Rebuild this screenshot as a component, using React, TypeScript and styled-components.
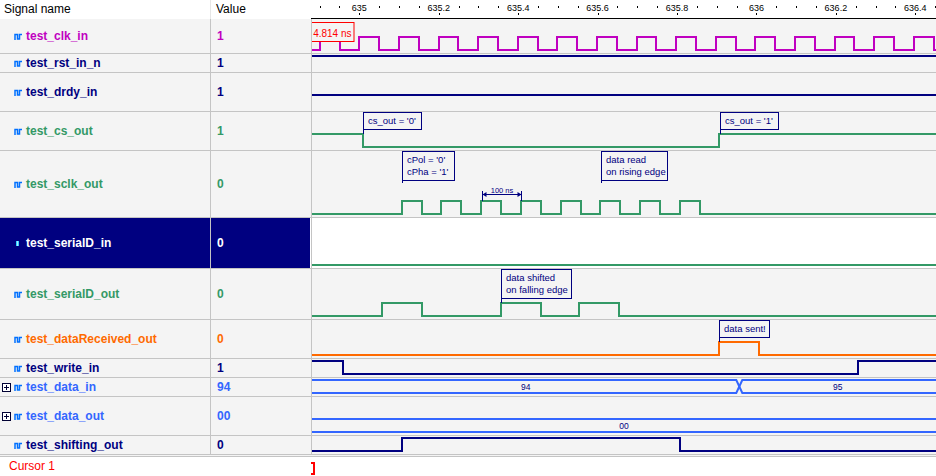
import React from 'react';
import styled, { createGlobalStyle } from 'styled-components';

const GlobalStyle = createGlobalStyle`
  html, body {
    margin: 0;
    padding: 0;
    background: #ffffff;
  }
  body {
    font-family: 'Liberation Sans', Arial, sans-serif;
  }
`;

const ROW_BG = '#f4f4f4';
const GRID = '#c4c4c4';
const NAVY = '#000080';
const MAGENTA = '#c000c0';
const GREEN = '#339966';
const ORANGE = '#ff6a00';
const BLUE = '#3366ff';
const WAVE_LEFT = 312;
const WAVE_WIDTH = 624;
const SVG_FONT = 'Liberation Sans, Arial, sans-serif';

type Level = 0 | 1;

interface Note {
  x: number;
  w: number;
  h: number;
  lines: string[];
  stem: number;
}

interface Signal {
  name: string;
  value: string;
  color: string;
  h: number;
  kind: 'bit' | 'bus';
  start?: Level;
  toggles?: number[];
  buses?: { until: number; label: string }[];
  notes?: Note[];
  span?: { x1: number; x2: number; y: number; label: string };
  flag?: boolean;
  expandable?: boolean;
  selected?: boolean;
}

const clockToggles: number[] = [];
for (let k = 0; k < 16; k++) {
  const rise = 319.8 + 39.6 * k;
  clockToggles.push(rise, rise + 19.8);
}

const sclkToggles: number[] = [];
for (let k = 0; k < 8; k++) {
  const rise = 401.7 + 39.75 * k;
  sclkToggles.push(rise, rise + 20);
}

const signals: Signal[] = [
  { name: 'test_clk_in', value: '1', color: MAGENTA, h: 35, kind: 'bit', start: 0, toggles: clockToggles, flag: true },
  { name: 'test_rst_in_n', value: '1', color: NAVY, h: 19, kind: 'bit', start: 1 },
  { name: 'test_drdy_in', value: '1', color: NAVY, h: 39, kind: 'bit', start: 1 },
  {
    name: 'test_cs_out',
    value: '1',
    color: GREEN,
    h: 39,
    kind: 'bit',
    start: 1,
    toggles: [362.7, 719],
    notes: [
      { x: 363, w: 58, h: 17, lines: ["cs_out = '0'"], stem: 22 },
      { x: 720, w: 58, h: 17, lines: ["cs_out = '1'"], stem: 22 },
    ],
  },
  {
    name: 'test_sclk_out',
    value: '0',
    color: GREEN,
    h: 67,
    kind: 'bit',
    start: 0,
    toggles: sclkToggles,
    notes: [
      { x: 402, w: 52, h: 29, lines: ["cPol = '0'", "cPha = '1'"], stem: 32 },
      { x: 601, w: 66, h: 29, lines: ['data read', 'on rising edge'], stem: 32 },
    ],
    span: { x1: 482, x2: 521, y: 43, label: '100 ns' },
  },
  { name: 'test_serialD_in', value: '0', color: GREEN, h: 51, kind: 'bit', start: 0, selected: true },
  {
    name: 'test_serialD_out',
    value: '0',
    color: GREEN,
    h: 51,
    kind: 'bit',
    start: 0,
    toggles: [381.7, 422, 500.7, 540.7, 579.3, 619.3],
    notes: [{ x: 501, w: 70, h: 29, lines: ['data shifted', 'on falling edge'], stem: 34 }],
  },
  {
    name: 'test_dataReceived_out',
    value: '0',
    color: ORANGE,
    h: 39,
    kind: 'bit',
    start: 0,
    toggles: [718.7, 758.7],
    notes: [{ x: 719, w: 50, h: 17, lines: ['data sent!'], stem: 22 }],
  },
  { name: 'test_write_in', value: '1', color: NAVY, h: 19, kind: 'bit', start: 1, toggles: [342.7, 857.7] },
  {
    name: 'test_data_in',
    value: '94',
    color: BLUE,
    h: 19,
    kind: 'bus',
    buses: [
      { until: 739.3, label: '94' },
      { until: 936, label: '95' },
    ],
    expandable: true,
  },
  {
    name: 'test_data_out',
    value: '00',
    color: BLUE,
    h: 39,
    kind: 'bus',
    buses: [{ until: 936, label: '00' }],
    expandable: true,
  },
  { name: 'test_shifting_out', value: '0', color: NAVY, h: 19, kind: 'bit', start: 0, toggles: [401.7, 680] },
];

const Frame = styled.div`
  width: 936px;
  height: 476px;
  overflow: hidden;
  background: ${ROW_BG};
  display: flex;
  flex-direction: column;
`;

const HeaderRow = styled.div`
  display: grid;
  grid-template-columns: 211px 100px 1fr;
  height: 19px;
  flex: none;
  background: #ffffff;
`;

const HeaderCell = styled.div<{ $pad: number; $divider?: boolean }>`
  box-sizing: border-box;
  padding-left: ${(p) => p.$pad}px;
  font-size: 12px;
  line-height: 18px;
  color: #000000;
  white-space: nowrap;
  border-right: ${(p) => (p.$divider ? '1px solid #e6e6e6' : 'none')};
`;

const RulerCell = styled.div`
  box-sizing: border-box;
  height: 19px;
  border-bottom: 1px solid #000000;

  svg {
    display: block;
  }
`;

const Row = styled.div<{ $h: number }>`
  display: grid;
  grid-template-columns: 211px 100px 1fr;
  height: ${(p) => p.$h}px;
  flex: none;
  box-sizing: border-box;
  border-bottom: 1px solid ${GRID};
`;

const NameCell = styled.div<{ $color: string; $selected?: boolean }>`
  box-sizing: border-box;
  display: flex;
  align-items: center;
  padding-left: 2px;
  border-right: 1px solid ${GRID};
  background: ${(p) => (p.$selected ? NAVY : ROW_BG)};
  color: ${(p) => (p.$selected ? '#ffffff' : p.$color)};
  font-size: 12px;
  font-weight: bold;
  line-height: 14px;
  white-space: nowrap;
`;

const ExpandSlot = styled.span`
  display: flex;
  align-items: center;
  width: 12px;
  flex: none;
`;

const IconSlot = styled.span`
  display: flex;
  align-items: center;
  width: 8px;
  margin-right: 4px;
  flex: none;
`;

const ValueCell = styled.div<{ $color: string; $selected?: boolean }>`
  display: flex;
  align-items: center;
  padding-left: 6px;
  background: ${(p) => (p.$selected ? NAVY : ROW_BG)};
  box-shadow: ${(p) => (p.$selected ? 'inset -1px 0 0 #ffffff' : 'none')};
  color: ${(p) => (p.$selected ? '#ffffff' : p.$color)};
  font-size: 12px;
  font-weight: bold;
`;

const WaveCell = styled.div<{ $selected?: boolean }>`
  border-left: 1px solid ${GRID};
  background: ${(p) => (p.$selected ? '#ffffff' : ROW_BG)};
  overflow: hidden;

  svg {
    display: block;
  }
`;

const Separator = styled.div`
  height: 2px;
  flex: none;
  box-sizing: border-box;
  border-bottom: 1px solid ${GRID};
`;

const CursorRow = styled.div`
  display: flex;
  height: 19px;
  flex: none;
  background: #ffffff;
`;

const CursorLabel = styled.div`
  width: 311px;
  box-sizing: border-box;
  padding-left: 9px;
  font-size: 12px;
  line-height: 19px;
  color: #ff0000;
`;

const CursorBracket = styled.span`
  width: 4px;
  height: 13px;
  margin-top: 5px;
  box-sizing: border-box;
  border: 2px solid #ff0000;
  border-left: none;
`;

function PulseIcon({ selected }: { selected?: boolean }) {
  if (selected) {
    return (
      <svg width="8" height="7" viewBox="0 0 8 7">
        <rect x="2" y="1" width="3" height="5" fill="#33ccff" />
        <rect x="3" y="1" width="1" height="5" fill="#aaeeff" />
      </svg>
    );
  }
  return (
    <svg width="8" height="7" viewBox="0 0 8 7">
      <path d="M1 7 V1.5 H3.5 V6 H5.5 V1.5 H8" fill="none" stroke="#0070ff" strokeWidth="1.5" />
    </svg>
  );
}

function ExpandBox() {
  return (
    <svg width="9" height="9" viewBox="0 0 9 9">
      <rect x="0.5" y="0.5" width="8" height="8" fill="#ffffff" stroke="#000033" />
      <path d="M2 4.5 H7 M4.5 2 V7" stroke="#000033" />
    </svg>
  );
}

function Ruler() {
  const origin = 359.3 - 311;
  const step = 79.43 / 4;
  const marks: React.ReactNode[] = [];
  for (let k = -3; k <= 32; k++) {
    const x = origin + k * step;
    if (x < 0 || x > 625) continue;
    const px = Math.round(x);
    if (k % 4 === 0) {
      const label = (635 + k * 0.05).toFixed(1).replace(/\.0$/, '');
      marks.push(
        <g key={k}>
          <text x={x} y={11} fontSize={9} textAnchor="middle" fill="#000" fontFamily={SVG_FONT}>
            {label}
          </text>
          <rect x={px} y={13} width={1} height={2} fill="#000" />
        </g>,
      );
    } else {
      marks.push(<rect key={k} x={px} y={6} width={1} height={2} fill="#000" />);
    }
  }
  return (
    <svg width="625" height="18">
      {marks}
    </svg>
  );
}

const rel = (x: number) => Math.round(x) - WAVE_LEFT;

function bitPath(start: Level, toggles: number[], ch: number) {
  const y = (l: Level) => (l ? ch - 16 : ch - 3);
  let level: Level = start;
  let d = `M0 ${y(level)}`;
  for (const t of toggles) {
    const x = rel(t);
    if (x > WAVE_WIDTH + 2) break;
    d += ` H${x}`;
    level = level ? 0 : 1;
    d += ` V${y(level)}`;
  }
  return `${d} H${WAVE_WIDTH}`;
}

function Wave({ signal }: { signal: Signal }) {
  const ch = signal.h - 1;
  const top = ch - 16;
  const bot = ch - 3;
  const parts: React.ReactNode[] = [];

  if (signal.kind === 'bit') {
    parts.push(
      <path
        key="wave"
        d={bitPath(signal.start ?? 0, signal.toggles ?? [], ch)}
        fill="none"
        stroke={signal.color}
        strokeWidth={2}
        shapeRendering="crispEdges"
      />,
    );
  } else if (signal.buses) {
    let a = `M0 ${top}`;
    let b = `M0 ${bot}`;
    let from = 0;
    signal.buses.forEach((seg, i) => {
      const end = Math.min(WAVE_WIDTH, seg.until - WAVE_LEFT);
      parts.push(
        <text
          key={`l${i}`}
          x={(from + end) / 2}
          y={(top + bot) / 2 + 3}
          fontSize={8.5}
          textAnchor="middle"
          fill={NAVY}
          fontFamily={SVG_FONT}
        >
          {seg.label}
        </text>,
      );
      if (end < WAVE_WIDTH) {
        a += ` H${end - 3} L${end + 3} ${bot}`;
        b += ` H${end - 3} L${end + 3} ${top}`;
      }
      from = end;
    });
    a += ` H${WAVE_WIDTH}`;
    b += ` H${WAVE_WIDTH}`;
    parts.unshift(
      <path key="a" d={a} fill="none" stroke={signal.color} strokeWidth={2} />,
      <path key="b" d={b} fill="none" stroke={signal.color} strokeWidth={2} />,
    );
  }

  signal.notes?.forEach((n, i) => {
    const x = n.x - WAVE_LEFT + 0.5;
    parts.push(
      <g key={`n${i}`}>
        <rect x={x} y={0.5} width={n.w} height={n.h} fill="none" stroke={NAVY} strokeWidth={1} />
        <line x1={x} y1={n.h + 0.5} x2={x} y2={n.stem} stroke={NAVY} strokeWidth={1} />
        {n.lines.map((line, j) => (
          <text key={j} x={x + 4.5} y={12 + j * 12} fontSize={9.5} fill="#00007f" fontFamily={SVG_FONT}>
            {line}
          </text>
        ))}
      </g>,
    );
  });

  if (signal.span) {
    const { x1, x2, y, label } = signal.span;
    const l = x1 - WAVE_LEFT + 0.5;
    const r = x2 - WAVE_LEFT + 0.5;
    parts.push(
      <g key="span" fill={NAVY} stroke="none">
        <line x1={l} y1={y + 0.5} x2={r} y2={y + 0.5} stroke={NAVY} strokeWidth={1} />
        <line x1={l} y1={y - 3} x2={l} y2={ch - 16} stroke={NAVY} strokeWidth={1} />
        <line x1={r} y1={y - 3} x2={r} y2={ch - 16} stroke={NAVY} strokeWidth={1} />
        <polygon points={`${l},${y + 0.5} ${l + 4},${y - 2} ${l + 4},${y + 3}`} />
        <polygon points={`${r},${y + 0.5} ${r - 4},${y - 2} ${r - 4},${y + 3}`} />
        <text x={(l + r) / 2} y={y - 1.5} fontSize={7.5} textAnchor="middle" fontFamily={SVG_FONT}>
          {label}
        </text>
      </g>,
    );
  }

  if (signal.flag) {
    parts.push(
      <g key="flag">
        <rect x={-0.5} y={3.5} width={42.5} height={19} fill={ROW_BG} stroke="#ff0000" strokeWidth={1} />
        <text x={39.5} y={17.5} fontSize={10} textAnchor="end" fill="#ff0000" fontFamily={SVG_FONT}>
          4.814 ns
        </text>
      </g>,
    );
  }

  return (
    <svg width={WAVE_WIDTH} height={ch}>
      {parts}
    </svg>
  );
}

function SignalRow({ signal }: { signal: Signal }) {
  return (
    <Row $h={signal.h}>
      <NameCell $color={signal.color} $selected={signal.selected}>
        <ExpandSlot>{signal.expandable && <ExpandBox />}</ExpandSlot>
        <IconSlot>
          <PulseIcon selected={signal.selected} />
        </IconSlot>
        {signal.name}
      </NameCell>
      <ValueCell $color={signal.color} $selected={signal.selected}>
        {signal.value}
      </ValueCell>
      <WaveCell $selected={signal.selected}>
        <Wave signal={signal} />
      </WaveCell>
    </Row>
  );
}

export default function App() {
  return (
    <>
      <GlobalStyle />
      <Frame>
        <HeaderRow>
          <HeaderCell $pad={4} $divider>
            Signal name
          </HeaderCell>
          <HeaderCell $pad={5}>Value</HeaderCell>
          <RulerCell>
            <Ruler />
          </RulerCell>
        </HeaderRow>
        {signals.map((s) => (
          <SignalRow key={s.name} signal={s} />
        ))}
        <Separator />
        <CursorRow>
          <CursorLabel>Cursor 1</CursorLabel>
          <CursorBracket />
        </CursorRow>
      </Frame>
    </>
  );
}
